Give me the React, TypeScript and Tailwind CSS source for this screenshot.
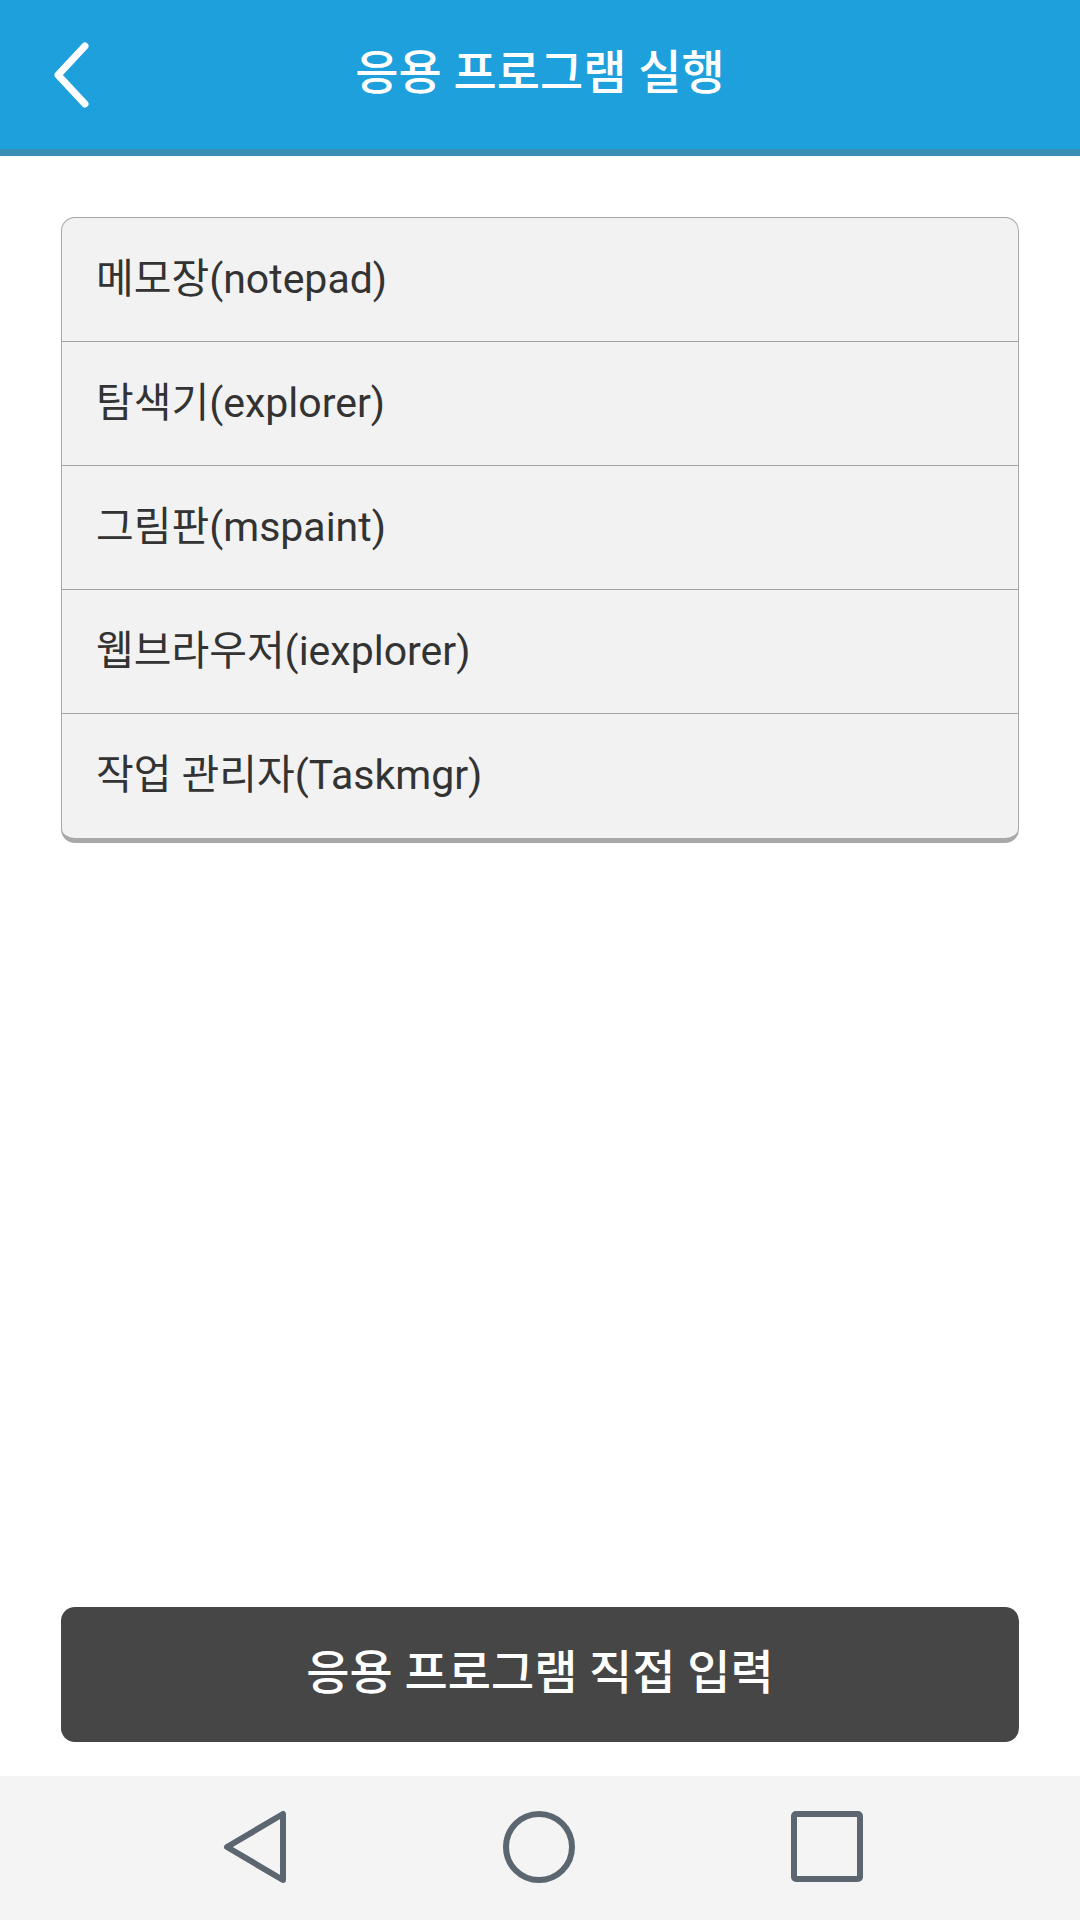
import React from "react";

const items = [
  "메모장(notepad)",
  "탐색기(explorer)",
  "그림판(mspaint)",
  "웹브라우저(iexplorer)",
  "작업 관리자(Taskmgr)",
];

const font = { fontFamily: "Roboto, 'Noto Sans CJK KR', sans-serif" };

export default function App() {
  return (
    <div
      className="w-[1080px] h-[1920px] flex flex-col bg-white"
      style={font}
    >
      <header className="h-[156px] bg-[#1ea0dd] border-b-[7px] border-[#3a8db5] grid grid-cols-[1fr_auto_1fr] items-center">
        <div className="pl-[51px] flex items-center">
          <svg width="42" height="68" viewBox="0 0 42 68" fill="none">
            <path
              d="M34 5 L7 34 L34 63"
              stroke="white"
              strokeWidth="7"
              strokeLinecap="round"
              strokeLinejoin="round"
            />
          </svg>
        </div>
        <h1 className="text-white text-[47px] leading-none font-medium pb-[4px]">
          응용 프로그램 실행
        </h1>
        <div />
      </header>

      <main className="px-[61px] pt-[61px]">
        <div className="rounded-[14px] border border-[#a8a8a8] border-b-[5px] bg-[#f2f2f2] overflow-hidden divide-y divide-[#a3a3a3]">
          {items.map((t) => (
            <div
              key={t}
              className="h-[124px] flex items-center pl-[34px] text-[41px] text-[#333333]"
            >
              {t}
            </div>
          ))}
        </div>
      </main>

      <div className="flex-1" />

      <div className="px-[61px] pb-[34px]">
        <button className="w-full h-[135px] rounded-[14px] bg-[#464646] text-white text-[47px] font-medium flex items-center justify-center pb-[2px]">
          응용 프로그램 직접 입력
        </button>
      </div>

      <nav className="h-[144px] bg-[#f4f4f4] flex items-center justify-center gap-[214px] pl-[6px] pb-[2px]">
        <svg width="66" height="74" viewBox="0 0 66 74" fill="none">
          <path
            d="M5 37 L61 4 L61 70 Z"
            stroke="#5b6670"
            strokeWidth="6"
            strokeLinejoin="round"
          />
        </svg>
        <svg width="74" height="74" viewBox="0 0 74 74" fill="none">
          <circle cx="37" cy="37" r="33" stroke="#5b6670" strokeWidth="6" />
        </svg>
        <svg width="74" height="74" viewBox="0 0 74 74" fill="none">
          <rect
            x="4"
            y="4"
            width="66"
            height="65"
            rx="2"
            stroke="#5b6670"
            strokeWidth="6"
          />
        </svg>
      </nav>
    </div>
  );
}
